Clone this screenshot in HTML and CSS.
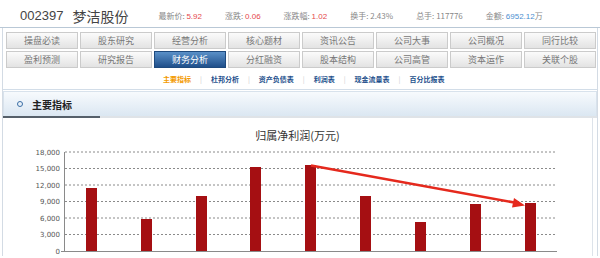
FILE: index.html
```html
<!DOCTYPE html>
<html>
<head>
<title>梦洁股份 - 财务分析</title>
<link rel="stylesheet" href="styles.css">
</head>
<body>
<div class="quote">
  <span class="code">002397</span>
  <span class="name">梦洁股份</span>
  <div class="stats">
    <span class="stat">最新价: <b>5.92</b></span>
    <span class="stat">涨跌: <b>0.06</b></span>
    <span class="stat">涨跌幅: <b>1.02</b></span>
    <span class="stat">换手: 2.43%</span>
    <span class="stat">总手: 117776</span>
    <span class="stat">金额: <b class="blue">6952.12</b>万</span>
  </div>
</div>

<div class="wrap">
  <div class="tabs">
    <div class="tab">操盘必读</div>
    <div class="tab">股东研究</div>
    <div class="tab">经营分析</div>
    <div class="tab">核心题材</div>
    <div class="tab">资讯公告</div>
    <div class="tab">公司大事</div>
    <div class="tab">公司概况</div>
    <div class="tab">同行比较</div>
    <div class="tab">盈利预测</div>
    <div class="tab">研究报告</div>
    <div class="tab active">财务分析</div>
    <div class="tab">分红融资</div>
    <div class="tab">股本结构</div>
    <div class="tab">公司高管</div>
    <div class="tab">资本运作</div>
    <div class="tab">关联个股</div>
  </div>

  <div class="subnav">
    <a class="cur">主要指标</a><i>|</i>
    <a>杜邦分析</a><i>|</i>
    <a>资产负债表</a><i>|</i>
    <a>利润表</a><i>|</i>
    <a>现金流量表</a><i>|</i>
    <a>百分比报表</a>
  </div>

  <div class="sec">
    <span class="dot"></span>
    <span class="sec-title">主要指标</span>
  </div>
  <div class="sec-line"></div>

  <div class="chart">
    <div class="chart-title">归属净利润(万元)</div>
    <svg class="plot" width="588" height="112" viewBox="4 146 588 112">
      <g class="grid">
        <line x1="66" y1="154" x2="558" y2="154"/>
        <line x1="66" y1="170.5" x2="558" y2="170.5"/>
        <line x1="66" y1="187" x2="558" y2="187"/>
        <line x1="66" y1="203.5" x2="558" y2="203.5"/>
        <line x1="66" y1="220" x2="558" y2="220"/>
        <line x1="66" y1="236.5" x2="558" y2="236.5"/>
      </g>
      <line class="axis" x1="65.5" y1="154" x2="65.5" y2="253"/>
      <line class="axis" x1="62" y1="253.5" x2="558" y2="253.5"/>
      <g class="ticks">
        <text x="61" y="156.5">18,000</text>
        <text x="61" y="173">15,000</text>
        <text x="61" y="189.5">12,000</text>
        <text x="61" y="206">9,000</text>
        <text x="61" y="222.5">6,000</text>
        <text x="61" y="239">3,000</text>
        <text x="61" y="255.5">0</text>
      </g>
      <g class="bars">
        <rect x="87" y="190" width="11" height="63"/>
        <rect x="142" y="221" width="11" height="32"/>
        <rect x="197" y="198" width="11" height="55"/>
        <rect x="251" y="169" width="11" height="84"/>
        <rect x="306" y="167" width="11" height="86"/>
        <rect x="361" y="198" width="11" height="55"/>
        <rect x="416" y="224" width="11" height="29"/>
        <rect x="471" y="206" width="11" height="47"/>
        <rect x="526" y="205" width="11" height="48"/>
      </g>
      <line class="trend" x1="312" y1="167.5" x2="518" y2="205"/>
      <polygon class="trend-head" points="526,207.5 515,200 513,209.5"/>
    </svg>
  </div>
</div>
</body>
</html>
```

FILE: styles.css
```css
body {
  margin: 0;
  width: 600px;
  height: 258px;
  overflow: hidden;
  background: #fff;
  font-family: "Noto Sans CJK SC", "Liberation Sans", sans-serif;
  color: #333;
}
.quote {
  display: flex;
  align-items: center;
  height: 23px;
  padding: 4px 0 0 20px;
  border-bottom: 1px solid #b9c8d6;
}
.code {
  font-family: "Liberation Sans", sans-serif;
  font-size: 13px;
  color: #444;
}
.name {
  margin-left: 9px;
  font-size: 14px;
  color: #444;
}
.stats {
  display: flex;
  gap: 23px;
  margin-left: 30px;
}
.stat {
  font-size: 8px;
  color: #888;
}
.stat b {
  font-weight: normal;
  color: #e5484d;
  font-family: "Liberation Sans", sans-serif;
}
.stat b.blue {
  color: #4b8fd0;
}
.wrap {
  margin: 0 2px;
  border-left: 1px solid #d3dbe4;
  border-right: 1px solid #d3dbe4;
}
.tabs {
  display: grid;
  grid-template-columns: repeat(8, 1fr);
  gap: 2px;
  padding: 4px 1px 0 3px;
}
.tab {
  height: 15px;
  line-height: 15px;
  border: 1px solid #cbcbcb;
  background: linear-gradient(#fbfbfb, #e3e3e3);
  text-align: center;
  font-size: 9px;
  color: #777;
}
.tab.active {
  background: linear-gradient(#5a90c8, #1f4f8a);
  border-color: #1e4a7e;
  color: #fff;
}
.subnav {
  display: flex;
  align-items: center;
  height: 21px;
  padding-left: 160px;
  border-bottom: 1px solid #d2dde8;
  font-size: 7px;
}
.subnav a {
  color: #1d4f8c;
  font-weight: bold;
}
.subnav a.cur {
  color: #f39a00;
}
.subnav i {
  font-style: normal;
  color: #ccc;
  margin: 0 9px;
}
.sec {
  display: flex;
  align-items: center;
  height: 24px;
  margin-top: 1px;
  padding-left: 13px;
  border: 1px solid #d8e2ec;
  border-bottom: none;
  background: linear-gradient(#f7fafd, #dbe7f2);
}
.dot {
  width: 4px;
  height: 4px;
  border: 1.5px solid #3a6ea5;
  border-radius: 50%;
}
.sec-title {
  margin-left: 9px;
  font-size: 10px;
  font-weight: bold;
  color: #222;
}
.sec-line {
  height: 2px;
  background: linear-gradient(to right, #56606a 0 97px, #dfe3e7 97px);
}
.chart {
  margin-right: 4px;
  border-right: 1px solid #dde3ea;
}
.chart-title {
  padding-top: 8px;
  height: 18px;
  line-height: 18px;
  text-align: center;
  font-size: 11px;
  color: #333;
}
.plot {
  display: block;
}
.grid line {
  stroke: #8a8a8a;
  stroke-width: 1;
  stroke-dasharray: 2 2;
}
.axis {
  stroke: #8a8a8a;
  stroke-width: 1;
}
.ticks text {
  font-family: "DejaVu Sans", sans-serif;
  font-size: 7px;
  fill: #555;
  text-anchor: end;
}
.bars rect {
  fill: #a50f12;
}
.trend {
  stroke: #e5291d;
  stroke-width: 2.5;
}
.trend-head {
  fill: #e5291d;
}
```
